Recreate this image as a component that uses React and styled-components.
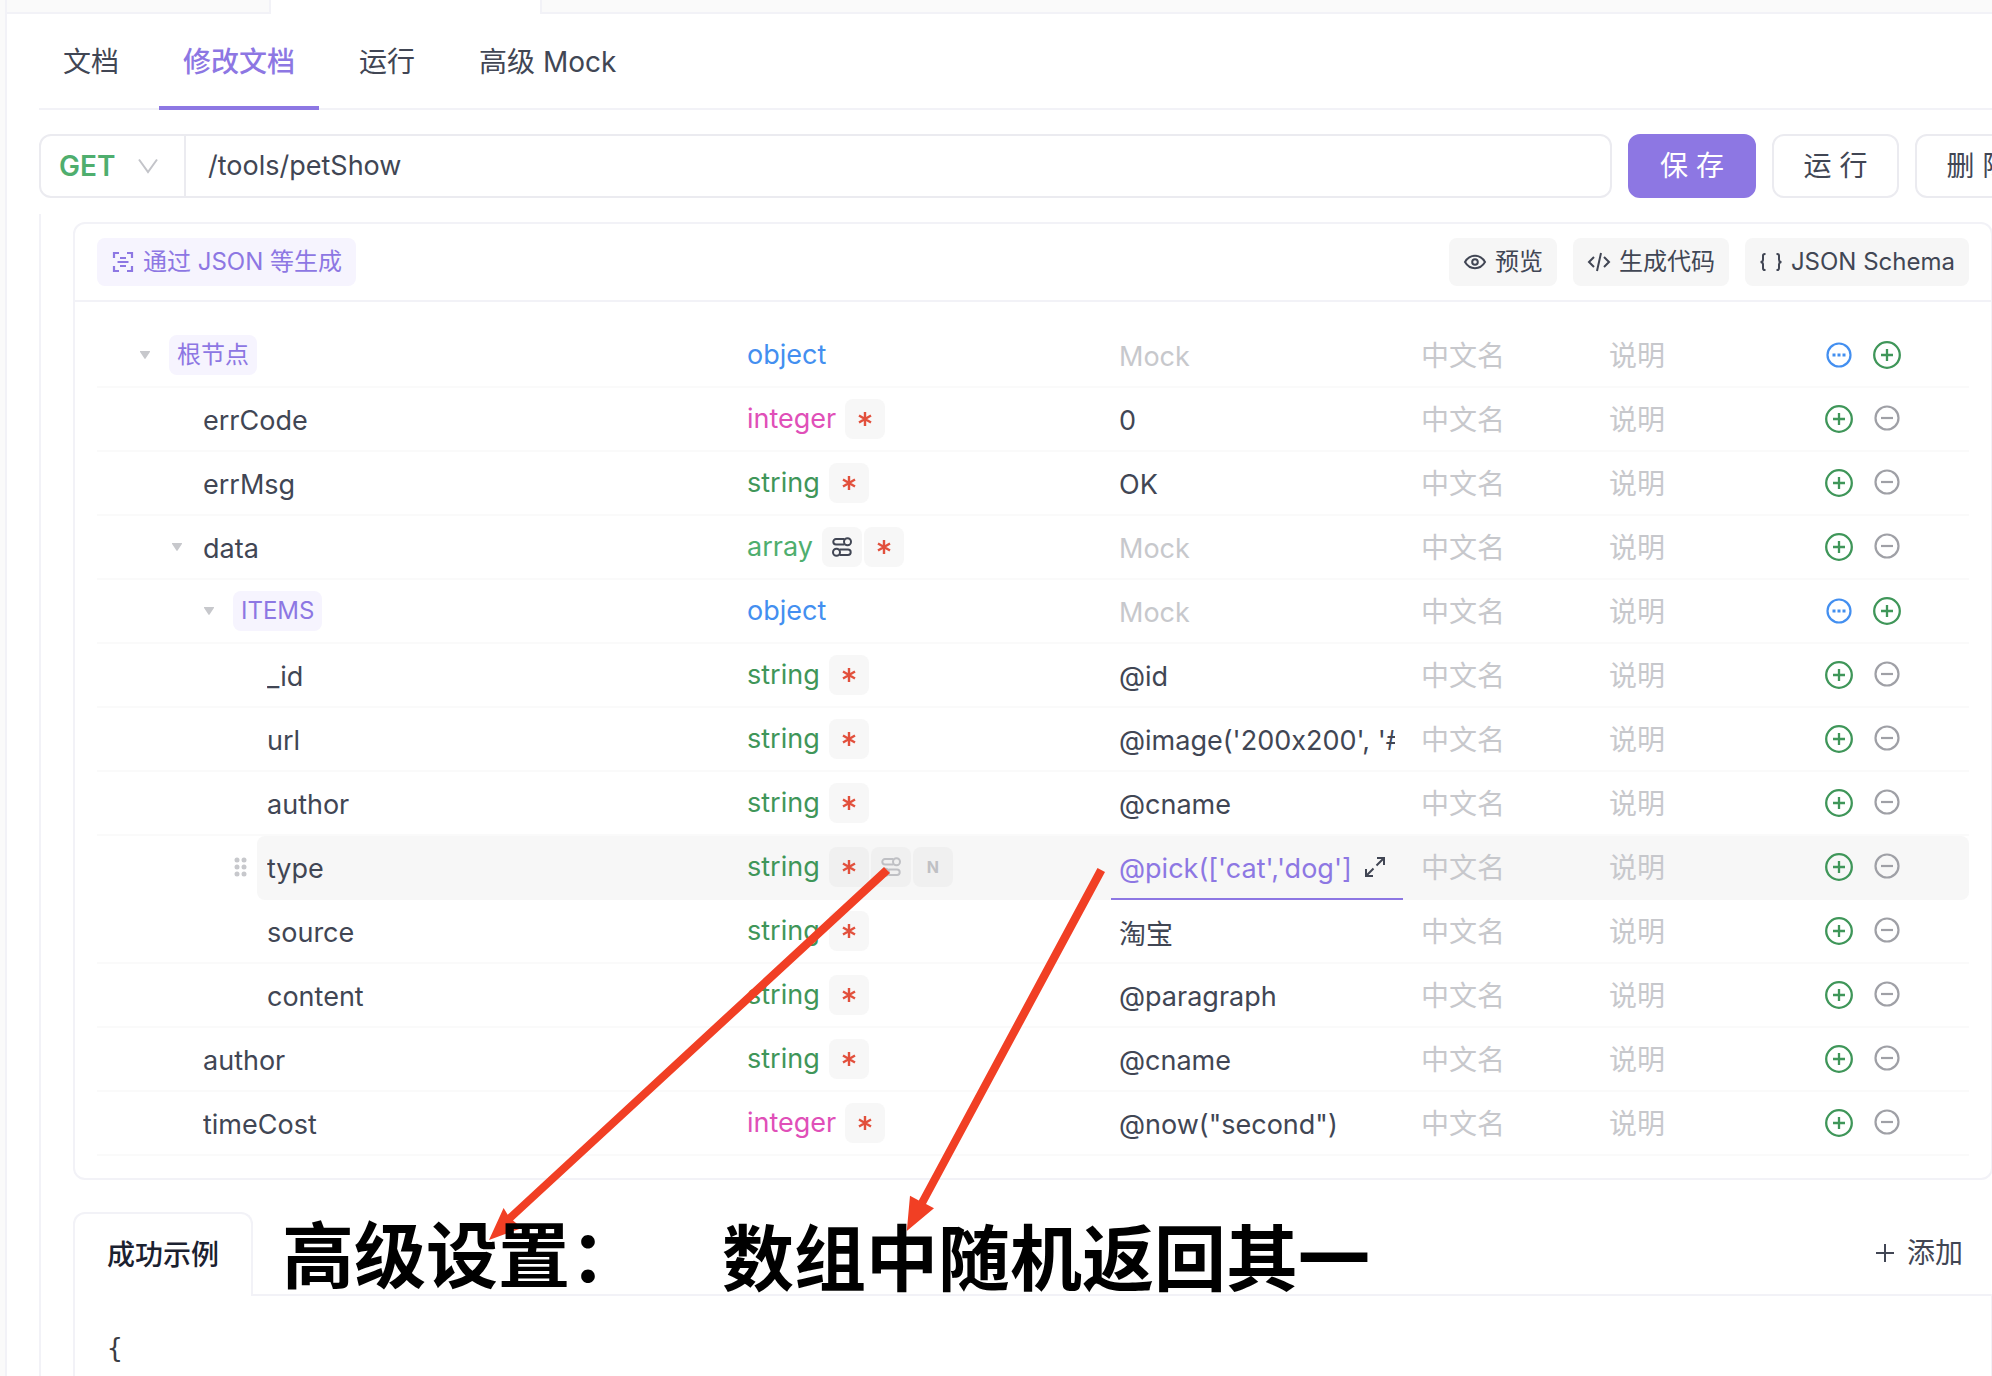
import React, { useState } from "react";
import styled, { createGlobalStyle } from "styled-components";

const GlobalStyle = createGlobalStyle`
  * {
    box-sizing: border-box;
  }
  body {
    margin: 0;
    overflow: hidden;
    background: #fff;
  }
  body, button, input, select {
    font-family: Inter, "Noto Sans CJK SC", sans-serif;
    font-size: 28px;
    line-height: 36px;
    font-feature-settings: "calt" 0;
    color: #414654;
  }
  button {
    padding: 0;
    border: none;
    background: none;
    cursor: pointer;
  }
`;

// PAGE FRAME

const Page = styled.div`
  position: relative;
  display: flex;
  height: 100vh;
  overflow: hidden;
`;

const Gutter = styled.div`
  flex: none;
  width: 7px;
  background: #fafafa;
  border-right: 2px solid #f2f2f7;
`;

const Main = styled.main`
  flex: 1;
  min-width: 0;
  display: flex;
  flex-direction: column;
`;

const TabStrip = styled.div`
  flex: none;
  display: flex;
  height: 14px;
`;

const StripItem = styled.div`
  width: ${(props) => props.width || "auto"};
  flex: ${(props) => (props.width ? "none" : 1)};
  background: ${(props) => (props.$active ? "#fff" : "#fafafa")};
  border: 0 solid #f2f2f7;
  border-bottom-width: ${(props) => (props.$active ? "0" : "2px")};
  border-left-width: ${(props) => (props.$side === "left" ? "2px" : "0")};
  border-right-width: ${(props) => (props.$side === "right" ? "2px" : "0")};
`;

const Nav = styled.nav`
  flex: none;
  display: flex;
  gap: 16px;
  height: 96px;
  margin-left: 32px;
  box-shadow: inset 0 -2px #f2f2f7;
`;

const NavLink = styled.a`
  display: flex;
  align-items: center;
  padding: 0 24px;
  color: ${(props) => (props.$active ? "#8d77e3" : "#414654")};
  font-weight: ${(props) => (props.$active ? 500 : 400)};
  box-shadow: ${(props) => (props.$active ? "inset 0 -4px #8d77e3" : "none")};
  text-decoration: none;
  white-space: nowrap;
`;

// REQUEST BAR, THE LAST BUTTON RUNS OUT OF THE WINDOW

const RequestBar = styled.form`
  flex: none;
  display: flex;
  gap: 16px;
  height: 64px;
  margin: 24px -50px 0 32px;
`;

const UrlBox = styled.div`
  flex: 1;
  display: flex;
  min-width: 0;
  border: 2px solid #ebebf0;
  border-radius: 12px;
`;

const MethodBox = styled.div`
  display: grid;
  flex: none;
  width: 145px;
  align-items: center;
  border-right: 2px solid #ebebf0;

  > * {
    grid-area: 1 / 1;
  }
  svg {
    justify-self: end;
    margin-right: 26px;
    pointer-events: none;
  }
`;

const MethodSelect = styled.select`
  width: 100%;
  height: 100%;
  padding: 0 18px;
  border: none;
  background: none;
  appearance: none;
  color: #4fae6e;
  font-weight: 600;
`;

const UrlInput = styled.input`
  flex: 1;
  min-width: 0;
  padding: 0 22px;
  border: none;
  background: none;
  outline: none;
  font-size: 27px;
`;

const ActionButton = styled.button`
  flex: none;
  width: ${(props) => (props.$primary ? "128px" : "127px")};
  border: 2px solid ${(props) => (props.$primary ? "#8d77e3" : "#ebebf0")};
  border-radius: 12px;
  background: ${(props) => (props.$primary ? "#8d77e3" : "#fff")};
  color: ${(props) => (props.$primary ? "#fff" : "#414654")};
`;

// SCHEMA PANEL

const Content = styled.section`
  flex: 1;
  min-height: 0;
  margin: 16px -1px 0 32px;
  padding: 8px 0 0 32px;
  border-left: 2px solid #f2f2f7;
  overflow: hidden;
`;

const Panel = styled.div`
  margin-bottom: 32px;
  border: 2px solid #f2f2f7;
  border-radius: 12px;
`;

const Toolbar = styled.div`
  display: flex;
  align-items: center;
  gap: 16px;
  height: 78px;
  padding: 0 22px;
  border-bottom: 2px solid #f2f2f7;
`;

const Spacer = styled.div`
  flex: 1;
`;

const ToolButton = styled.button`
  display: flex;
  align-items: center;
  gap: 8px;
  height: 48px;
  padding: 0 14px;
  border-radius: 8px;
  background: ${(props) => (props.$accent ? "#f6f4fe" : "#f6f6f6")};
  color: ${(props) => (props.$accent ? "#8d77e3" : "#414654")};
  font-size: 24px;
  white-space: nowrap;
`;

const Table = styled.table`
  display: block;
  padding: 22px;
`;

const Body = styled.tbody`
  display: block;
`;

const Row = styled.tr`
  display: grid;
  grid-template-columns: minmax(0, 1fr) 372px 292px 198px 204px 164px;
  height: 64px;
`;

const Cell = styled.td`
  display: flex;
  align-items: center;
  min-width: 0;
  padding: 0 ${(props) => props.$pad || "0"};
  background: ${(props) => (props.$active ? "#f7f7f7" : "none")};
  border-bottom: 2px solid ${(props) => (props.$active ? "#f7f7f7" : "#fafafa")};
`;

const NameCell = styled(Cell)`
  background: none;
  border-bottom-color: ${(props) => (props.$active ? "transparent" : "#fafafa")};
`;

const MockCell = styled(Cell)`
  border-bottom-color: ${(props) => (props.$active ? "#8d77e3" : "#fafafa")};
`;

const ActionCell = styled(Cell)`
  gap: 20px;
  border-radius: ${(props) => (props.$active ? "0 8px 8px 0" : "0")};
`;

const Indent = styled.div`
  display: flex;
  flex: none;
  align-items: center;
  justify-content: flex-end;
  width: ${(props) => 64 + props.$level * 32}px;
  padding-right: 10px;
`;

const NameBox = styled.div`
  flex: 1;
  display: flex;
  align-items: center;
  align-self: stretch;
  min-width: 0;
  margin-bottom: -2px;
  padding: 0 ${(props) => (props.$tag ? "8px" : "10px")} 2px;
  border-radius: 8px 0 0 8px;
  background: ${(props) => (props.$active ? "#f7f7f7" : "none")};
`;

const Field = styled.input`
  width: 100%;
  min-width: 0;
  height: 60px;
  padding: 2px 0 0;
  border: none;
  background: none;
  outline: none;
  color: ${(props) => (props.$accent ? "#8d77e3" : "#414654")};
  font-size: ${(props) => (props.$code ? "27px" : "28px")};

  &::placeholder {
    color: #c7c8cc;
    opacity: 1;
  }
`;

const Tag = styled.span`
  display: flex;
  align-items: center;
  height: 40px;
  padding: 0 8px;
  border-radius: 8px;
  background: #f6f4fe;
  color: #8d77e3;
  font-size: 24px;
`;

const typeColors = {
  object: "#438ff0",
  integer: "#e04fb8",
  string: "#3f9659",
  array: "#4fae6e",
};

const TypeName = styled.span`
  margin-right: 9px;
  color: ${(props) => typeColors[props.$type]};
  font-size: 27px;
`;

const Badge = styled.button`
  display: flex;
  align-items: center;
  justify-content: center;
  width: 40px;
  height: 40px;
  margin-right: 2px;
  border-radius: 8px;
  background: ${(props) => (props.$active ? "#f0f0f0" : "#f7f7f7")};
  color: #bfc0c4;
  font-size: 16px;
  font-weight: 700;
`;

const IconButton = styled.button`
  display: flex;
  width: 28px;
  height: 28px;
`;

const ExpandButton = styled(IconButton)`
  flex: none;
  margin: 0 6px 0 4px;
  align-items: center;
  justify-content: center;
`;

// RESPONSE EXAMPLE

const ExampleTabs = styled.div`
  display: flex;
  align-items: stretch;
  height: 84px;
`;

const ExampleTab = styled.button`
  padding: 0 32px;
  border: 2px solid #f2f2f7;
  border-bottom: none;
  border-radius: 12px 12px 0 0;
  color: #1b2130;
  font-weight: 500;
`;

const ExampleRest = styled.div`
  flex: 1;
  display: flex;
  justify-content: flex-end;
  padding-right: 30px;
  border-bottom: 2px solid #f2f2f7;
`;

const AddButton = styled.button`
  display: flex;
  align-items: center;
  gap: 12px;
`;

const Code = styled.pre`
  height: 400px;
  margin: 0;
  padding: 34px 32px;
  border: 2px solid #f2f2f7;
  border-top: none;
  color: #3b3d42;
  font-family: "DejaVu Sans Mono", monospace;
  font-size: 26px;
  line-height: 36px;
`;

// NOTES DRAWN OVER THE PAGE

const Arrows = styled.svg`
  position: absolute;
  top: 0;
  left: 0;
  width: 100%;
  height: 100%;
  pointer-events: none;
`;

const Note = styled.div`
  position: absolute;
  top: ${(props) => props.$top}px;
  left: ${(props) => props.$left}px;
  color: #000;
  font-size: 72px;
  font-weight: 600;
  line-height: 80px;
  white-space: nowrap;
  pointer-events: none;
`;

// ICONS

const ChevronIcon = () => (
  <svg width="20" height="16" viewBox="0 0 20 16" fill="none" stroke="#c3c4c9" strokeWidth="2">
    <path d="M1 1.5 10 14 19 1.5" />
  </svg>
);

const ScanIcon = () => (
  <svg width="24" height="24" viewBox="0 0 24 24" fill="none" stroke="currentColor" strokeWidth="2.2">
    <path d="M3 8V3h5M16 3h5V8M21 16v5h-5M8 21H3V16" />
    <path d="M9 8h6M6.500 12h11M9 16h6" />
  </svg>
);

const EyeIcon = () => (
  <svg width="24" height="24" viewBox="0 0 24 24" fill="none" stroke="currentColor" strokeWidth="2">
    <path d="M2 12C4.500 7.700 8 5.800 12 5.800S19.500 7.700 22 12C19.500 16.300 16 18.200 12 18.200S4.500 16.300 2 12Z" />
    <circle cx="12" cy="12" r="2.800" />
  </svg>
);

const CodeIcon = () => (
  <svg width="24" height="24" viewBox="0 0 24 24" fill="none" stroke="currentColor" strokeWidth="2">
    <path d="M7 7 2 12l5 5M17 7l5 5-5 5M14 3l-4 18" />
  </svg>
);

const BracesIcon = () => (
  <svg width="24" height="24" viewBox="0 0 24 24" fill="none" stroke="currentColor" strokeWidth="2">
    <path d="M6.500 4H5.800C4.600 4 4 4.600 4 5.800V9.500C4 11 3.200 12 1.500 12 3.200 12 4 13 4 14.500v3.700C4 19.400 4.600 20 5.800 20h.7" />
    <path d="M17.500 4h.7C19.400 4 20 4.600 20 5.800V9.500c0 1.500.8 2.500 2.500 2.500-1.700 0-2.500 1-2.500 2.500v3.700c0 1.200-.6 1.800-1.800 1.800h-.7" />
  </svg>
);

const CaretIcon = () => (
  <svg width="12" height="10" viewBox="0 0 12 10" fill="#c7c8cc">
    <path d="M1.500 1h9c.5 0 .7.500.4.900L6.600 8.600c-.3.500-.9.500-1.200 0L1.100 1.900C.8 1.500 1 1 1.500 1Z" />
  </svg>
);

const DragIcon = () => (
  <svg width="14" height="20" viewBox="0 0 14 20" fill="#c7c8cc">
    {[3, 10, 17].map((y) => (
      <React.Fragment key={y}>
        <circle cx="4" cy={y} r="2.500" />
        <circle cx="11" cy={y} r="2.500" />
      </React.Fragment>
    ))}
  </svg>
);

const StarIcon = () => (
  <svg width="14" height="14" viewBox="0 0 14 14" stroke="#e2503c" strokeWidth="2.4">
    <path d="M7 0v14M1 3.500l12 7M13 3.500l-12 7" />
  </svg>
);

const SettingIcon = ({ color }) => (
  <svg width="20" height="20" viewBox="0 0 20 20" fill="none" stroke={color} strokeWidth="2">
    <path d="M12.500 7.500H4a2.700 2.700 0 0 1 0-5.400h8.500" />
    <circle cx="15.500" cy="4.800" r="3.500" />
    <path d="M7.500 12.500H16a2.700 2.700 0 0 1 0 5.400H7.500" />
    <circle cx="4.500" cy="15.200" r="3.500" />
  </svg>
);

const ExpandIcon = () => (
  <svg width="22" height="22" viewBox="0 0 22 22" fill="none" stroke="#414654" strokeWidth="2">
    <path d="M13 2h7v7M20 2l-7.500 7.500M9 20H2v-7M2 20l7.500-7.500" />
  </svg>
);

const MoreIcon = () => (
  <svg width="28" height="28" viewBox="0 0 28 28">
    <circle cx="14" cy="14" r="11.500" fill="none" stroke="#438ff0" strokeWidth="2.200" />
    <path d="M7.500 12.500h3v3h-3zM12.500 12.500h3v3h-3zM17.500 12.500h3v3h-3z" fill="#438ff0" />
  </svg>
);

const PlusIcon = () => (
  <svg width="28" height="28" viewBox="0 0 28 28" fill="none" stroke="#3f9659" strokeWidth="2.300">
    <circle cx="14" cy="14" r="12.800" />
    <path d="M8 14h12M14 8v12" />
  </svg>
);

const MinusIcon = () => (
  <svg width="28" height="28" viewBox="0 0 28 28" fill="none" stroke="#9fa0a6" strokeWidth="2.200">
    <circle cx="14" cy="13" r="11.500" />
    <path d="M8 13h12" />
  </svg>
);

const AddIcon = () => (
  <svg width="20" height="20" viewBox="0 0 20 20" stroke="currentColor" strokeWidth="2">
    <path d="M1 10h18M10 1v18" />
  </svg>
);

const tabs = ["文档", "修改文档", "运行", "高级 Mock"];

const fields = [
  { name: "根节点", level: 0, type: "object", tag: true, open: true },
  { name: "errCode", level: 1, type: "integer", mock: "0" },
  { name: "errMsg", level: 1, type: "string", mock: "OK" },
  { name: "data", level: 1, type: "array", open: true, setting: true },
  { name: "ITEMS", level: 2, type: "object", tag: true, open: true },
  { name: "_id", level: 3, type: "string", mock: "@id" },
  { name: "url", level: 3, type: "string", mock: "@image('200x200', '#50B347')" },
  { name: "author", level: 3, type: "string", mock: "@cname" },
  { name: "type", level: 3, type: "string", mock: "@pick(['cat','dog']", active: true },
  { name: "source", level: 3, type: "string", mock: "淘宝" },
  { name: "content", level: 3, type: "string", mock: "@paragraph" },
  { name: "author", level: 1, type: "string", mock: "@cname" },
  { name: "timeCost", level: 1, type: "integer", mock: '@now("second")' },
];

const SchemaRow = ({ field }) => {
  const { name, level, type, mock, tag, open, setting, active } = field;
  return (
    <Row>
      <NameCell $active={active}>
        <Indent $level={level}>
          {open && <CaretIcon />}
          {active && <DragIcon />}
        </Indent>
        <NameBox $active={active} $tag={tag}>
          {tag ? <Tag>{name}</Tag> : <Field aria-label="字段名" defaultValue={name} $code />}
        </NameBox>
      </NameCell>
      <Cell $pad="8px" $active={active}>
        <TypeName $type={type}>{type}</TypeName>
        {setting && (
          <Badge type="button" aria-label="高级设置">
            <SettingIcon color="#414654" />
          </Badge>
        )}
        {!tag && (
          <Badge type="button" aria-label="必需" $active={active}>
            <StarIcon />
          </Badge>
        )}
        {active && (
          <>
            <Badge type="button" aria-label="高级设置" $active>
              <SettingIcon color="#bfc0c4" />
            </Badge>
            <Badge type="button" $active>
              N
            </Badge>
          </>
        )}
      </Cell>
      <MockCell $pad="8px" $active={active}>
        <Field aria-label="Mock" placeholder="Mock" defaultValue={mock} $accent={active} $code />
        {active && (
          <ExpandButton type="button" aria-label="展开">
            <ExpandIcon />
          </ExpandButton>
        )}
      </MockCell>
      <Cell $pad="18px" $active={active}>
        <Field aria-label="中文名" placeholder="中文名" />
      </Cell>
      <Cell $pad="8px" $active={active}>
        <Field aria-label="说明" placeholder="说明" />
      </Cell>
      <ActionCell $pad="20px" $active={active}>
        <IconButton type="button" aria-label={tag ? "更多" : "添加"}>
          {tag ? <MoreIcon /> : <PlusIcon />}
        </IconButton>
        <IconButton type="button" aria-label={tag ? "添加" : "删除"}>
          {tag ? <PlusIcon /> : <MinusIcon />}
        </IconButton>
      </ActionCell>
    </Row>
  );
};

const App = () => {
  const [current, setCurrent] = useState("修改文档");

  return (
    <Page>
      <GlobalStyle />
      <Gutter />
      <Main>
        <TabStrip>
          <StripItem width="264px" $side="right" />
          <StripItem width="269px" $active />
          <StripItem $side="left" />
        </TabStrip>
        <Nav>
          {tabs.map((el) => (
            <NavLink href="#" key={el} $active={el === current} onClick={() => setCurrent(el)}>
              {el}
            </NavLink>
          ))}
        </Nav>
        <RequestBar>
          <UrlBox>
            <MethodBox>
              <MethodSelect aria-label="请求方法" defaultValue="GET">
                <option>GET</option>
                <option>POST</option>
              </MethodSelect>
              <ChevronIcon />
            </MethodBox>
            <UrlInput aria-label="接口路径" defaultValue="/tools/petShow" />
          </UrlBox>
          <ActionButton type="button" $primary>
            保 存
          </ActionButton>
          <ActionButton type="button">运 行</ActionButton>
          <ActionButton type="button">删 除</ActionButton>
        </RequestBar>
        <Content>
          <Panel>
            <Toolbar>
              <ToolButton type="button" $accent>
                <ScanIcon />
                通过 JSON 等生成
              </ToolButton>
              <Spacer />
              <ToolButton type="button">
                <EyeIcon />
                预览
              </ToolButton>
              <ToolButton type="button">
                <CodeIcon />
                生成代码
              </ToolButton>
              <ToolButton type="button">
                <BracesIcon />
                JSON Schema
              </ToolButton>
            </Toolbar>
            <Table>
              <Body>
                {fields.map((el, index) => (
                  <SchemaRow field={el} key={index} />
                ))}
              </Body>
            </Table>
          </Panel>
          <ExampleTabs>
            <ExampleTab type="button">成功示例</ExampleTab>
            <ExampleRest>
              <AddButton type="button">
                <AddIcon />
                添加
              </AddButton>
            </ExampleRest>
          </ExampleTabs>
          <Code>{"{"}</Code>
        </Content>
      </Main>
      <Arrows fill="#f13f24">
        <path d="M884 867 507.700 1214.700 503.600 1208 489 1240 522 1228 513 1220.500 890 873Z" />
        <path d="M1097.500 868 918.800 1200.500 910 1195.700 906.800 1231 934 1208.300 926 1204 1105 872Z" />
      </Arrows>
      <Note $top={1216} $left={282}>
        高级设置：
      </Note>
      <Note $top={1219} $left={722}>
        数组中随机返回其一
      </Note>
    </Page>
  );
};

export default App;
